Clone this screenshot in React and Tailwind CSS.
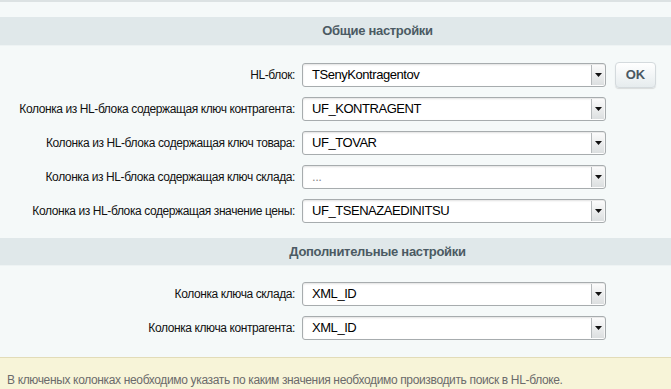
import React from 'react';

const rowsMain = [
    { label: 'HL-блок:', value: 'TSenyKontragentov', ok: true },
    { label: 'Колонка из HL-блока содержащая ключ контрагента:', value: 'UF_KONTRAGENT' },
    { label: 'Колонка из HL-блока содержащая ключ товара:', value: 'UF_TOVAR' },
    { label: 'Колонка из HL-блока содержащая ключ склада:', value: '...', muted: true },
    { label: 'Колонка из HL-блока содержащая значение цены:', value: 'UF_TSENAZAEDINITSU' },
];

const rowsExtra = [
    { label: 'Колонка ключа склада:', value: 'XML_ID' },
    { label: 'Колонка ключа контрагента:', value: 'XML_ID' },
];

function Select({ value, muted }) {
    return (
        <div className="relative w-[304px] h-[24px] rounded-[3px] border border-[#a7acae] bg-white shadow-[inset_0_1px_2px_rgba(0,0,0,0.12)] flex items-center">
            <span className={`pl-[9px] text-[13px] tracking-[-0.45px] ${muted ? 'text-[#8a8a8a]' : 'text-black'}`}>{value}</span>
            {/* dropdown arrow */}
            <div className="absolute right-[1px] top-[1px] bottom-[1px] w-[13px] border-l border-[#b5b9bb] bg-gradient-to-b from-[#fbfbfb] to-[#dcdfe0] flex items-center justify-center">
                <svg width="7" height="4" viewBox="0 0 7 4"><path d="M0 0h7L3.5 4z" fill="#111" /></svg>
            </div>
        </div>
    );
}

function Row({ label, value, ok, muted }) {
    return (
        <div className="h-[34px] flex items-center">
            <div className="w-[295px] text-right text-[12px] tracking-[-0.4px] text-[#111] whitespace-nowrap">{label}</div>
            <div className="ml-[7px]">
                <Select value={value} muted={muted} />
            </div>
            {ok && (
                <button className="ml-[9px] w-[41px] h-[26px] rounded-[4px] border border-[#d4dadd] bg-gradient-to-b from-white to-[#e6ecee] shadow-[0_1px_1px_rgba(0,0,0,0.12)] text-[13px] font-bold text-[#4a5861]">
                    OK
                </button>
            )}
        </div>
    );
}

function Heading({ children }) {
    return (
        <div className="h-[30px] bg-[#e0e8ea] border-b border-[#eef3f4] flex items-center justify-center pl-[84px] text-[13px] font-bold tracking-[-0.3px] text-[#4b5a63]">
            {children}
        </div>
    );
}

export default function App() {
    return (
        <div className="w-[671px] h-[389px] overflow-hidden bg-[#f5f9f9] font-['Liberation_Sans',Arial,sans-serif] flex flex-col">
            <div className="h-[18px] border-t-2 border-[#dce2e3]" />
            <Heading>Общие настройки</Heading>
            <div className="pt-[12px] pb-[10px]">
                {rowsMain.map((r) => (
                    <Row key={r.label} {...r} />
                ))}
            </div>
            <Heading>Дополнительные настройки</Heading>
            <div className="pt-[11px] pb-[12px]">
                {rowsExtra.map((r) => (
                    <Row key={r.label} {...r} />
                ))}
            </div>
            {/* notice */}
            <div className="flex-1 border-t border-[#e2dcb8] bg-[#f7f4d8] pl-[7px] pt-[13px] text-[12px] tracking-[-0.35px] text-[#6b6b6b] whitespace-nowrap">
                В ключеных колонках необходимо указать по каким значения необходимо производить поиск в HL-блоке.
            </div>
        </div>
    );
}
